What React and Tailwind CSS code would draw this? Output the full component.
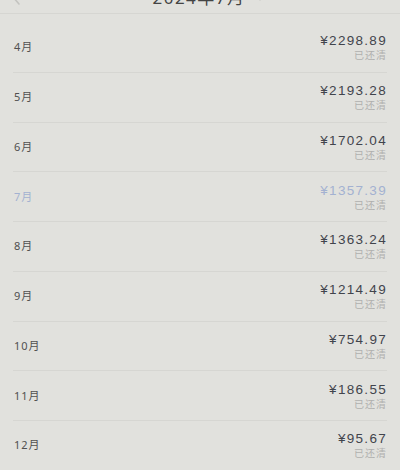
import React from "react";

const rows = [
  ["4月", "¥2298.89"],
  ["5月", "¥2193.28"],
  ["6月", "¥1702.04"],
  ["7月", "¥1357.39", true],
  ["8月", "¥1363.24"],
  ["9月", "¥1214.49"],
  ["10月", "¥754.97"],
  ["11月", "¥186.55"],
  ["12月", "¥95.67"],
];

export default function App() {
  return (
    <div
      className="w-[400px] h-[470px] overflow-hidden bg-[#e1e1dd]"
      style={{ fontFamily: '"Noto Sans", "Noto Sans CJK SC", sans-serif' }}
    >
      <div className="relative h-[14px] overflow-hidden border-b border-[#d6d6d2]">
        <div className="absolute left-[10px] top-[-12px] text-[#c4c4c0]">
          <svg width="12" height="18" viewBox="0 0 12 18">
            <path d="M9 2 L3 9 L9 16" fill="none" stroke="currentColor" strokeWidth="1.6" strokeLinecap="round" />
          </svg>
        </div>
        <div className="flex justify-center items-center gap-[10px] -mt-[12px] ml-[16px]">
          <span className="text-[17px] leading-[20px] text-[#444444] tracking-[1.5px]">2024年7月</span>
          <span className="w-0 h-0 border-l-[4px] border-r-[4px] border-t-[5px] border-l-transparent border-r-transparent border-t-[#c8c8c4]" />
        </div>
      </div>
      <div className="h-[9px]" />
      <div className="px-[13px]">
        {rows.map(([m, a, active]) => (
          <div
            key={m}
            className="h-[49.75px] flex items-center justify-between border-b border-[#d6d6d2]"
          >
            <span
              className={`text-[11px] leading-[14px] pl-[1px] tracking-[1px] ${active ? "text-[#a3b1d1]" : "text-[#505050]"}`}
            >
              {m}
            </span>
            <div className="flex flex-col items-end">
              <span
                className={`font-['Liberation_Sans',sans-serif] text-[13.5px] leading-[15px] tracking-[1.3px] ${active ? "text-[#a3b1d1]" : "text-[#41444c]"}`}
              >
                {a}
              </span>
              <span className="mt-[1px] text-[10px] leading-[12px] text-[#b0b0ae] tracking-[1px]">已还清</span>
            </div>
          </div>
        ))}
      </div>
    </div>
  );
}
